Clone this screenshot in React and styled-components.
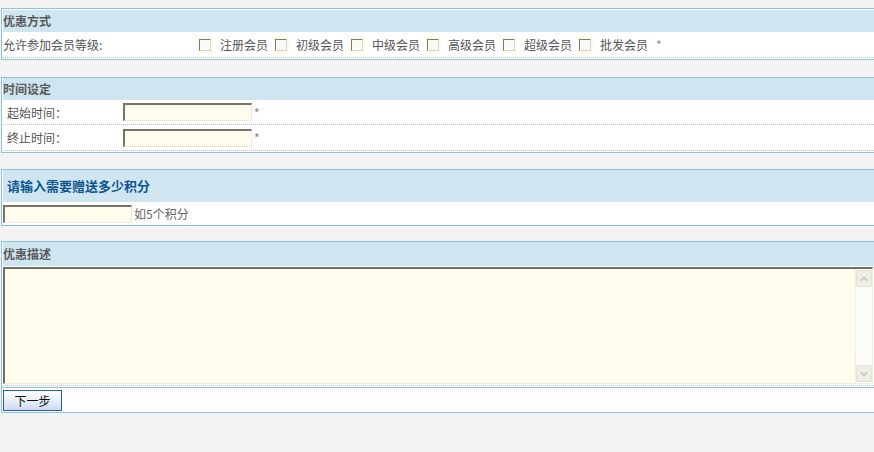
import styled, { createGlobalStyle } from "styled-components";
import { ChevronUp, ChevronDown } from "lucide-react";

const GlobalStyle = createGlobalStyle`
  html, body {
    margin: 0;
    padding: 0;
    background: #f3f3f3;
    overflow: hidden;
  }
  body {
    font-family: "Noto Sans CJK SC", "Liberation Sans", sans-serif;
    font-size: 12px;
    color: #555;
  }
`;

const Page = styled.div`
  padding: 8px 0 0 1px;
  height: 452px;
  box-sizing: border-box;
`;

// bordered block, open on the right like the old full-width tables
const Section = styled.div`
  border: 1px solid #8dc1dc;
  border-right: 0;
  background: #fff;
  padding: ${(p) => (p.$flush ? 0 : 1)}px 0 1px 1px;
  margin-bottom: ${(p) => p.$gap}px;
`;

const Title = styled.div`
  height: ${(p) => p.$h || 22}px;
  line-height: ${(p) => p.$h || 22}px;
  background: #cfe5f0;
  padding-left: ${(p) => p.$indent || 0}px;
  font-weight: bold;
  font-size: ${(p) => (p.$big ? 13 : 12)}px;
  color: ${(p) => (p.$big ? "#0d5590" : "#5a5a5a")};
  margin-bottom: ${(p) => p.$gapBelow || 0}px;
`;

const Row = styled.div`
  display: flex;
  align-items: center;
  height: ${(p) => p.$h || 25}px;
  border-bottom: ${(p) => (p.$plain ? "0" : "1px dotted #bdbdbd")};
`;

const Label = styled.div`
  width: ${(p) => p.$w}px;
  padding-left: ${(p) => p.$pad || 0}px;
  box-sizing: border-box;
  flex-shrink: 0;
  color: #555;
`;

const LevelList = styled.div`
  display: flex;
  align-items: center;
`;

const Level = styled.label`
  display: flex;
  align-items: center;
  margin-right: 5px;
`;

const CheckCell = styled.span`
  display: flex;
  align-items: center;
  justify-content: center;
  width: 16px;
  height: 18px;
  background: #fffbea;
  margin-right: 7px;
`;

const Check = styled.input.attrs({ type: "checkbox" })`
  appearance: none;
  margin: 0;
  width: 12px;
  height: 12px;
  box-sizing: border-box;
  border-top: 1px solid #7c7b70;
  border-left: 1px solid #7c7b70;
  border-right: 1px solid #d4d3c8;
  border-bottom: 1px solid #d4d3c8;
  background: #fbfbf6;
`;

const Star = styled.span`
  color: ${(p) => p.$c || "#8b91a8"};
  margin-left: ${(p) => p.$ml || 0}px;
`;

const Field = styled.input`
  width: 129px;
  height: 18px;
  box-sizing: border-box;
  margin: 0;
  padding: 0 2px;
  background: #fffcee;
  border-top: 2px solid #767467;
  border-left: 2px solid #767467;
  border-right: 1px solid #ece9dc;
  border-bottom: 1px solid #ece9dc;
  outline: none;
  font: inherit;
`;

const Hint = styled.span`
  color: #666;
  margin-left: 2px;
`;

const NoteBox = styled.div`
  display: flex;
  height: 117px;
  margin: 1px 1px 0 0;
  box-sizing: border-box;
  background: #fffcee;
  border-top: 2px solid #716f63;
  border-left: 2px solid #716f63;
  border-right: 1px solid #eeece0;
  border-bottom: 1px solid #eeece0;
`;

const Note = styled.textarea`
  flex: 1;
  border: 0;
  margin: 0;
  padding: 2px;
  background: transparent;
  resize: none;
  outline: none;
  font: inherit;
`;

const ScrollTrack = styled.div`
  width: 16px;
  display: flex;
  flex-direction: column;
  justify-content: space-between;
  align-items: flex-end;
  padding: 1px 0;
  background: #fbfbf9;
  border-left: 1px solid #f0efe6;
`;

const ScrollBtn = styled.div`
  width: 14px;
  height: 15px;
  display: flex;
  align-items: center;
  justify-content: center;
  background: #efeee6;
  border: 1px solid #e2e1d8;
  border-radius: 2px;
  color: #c2c2ba;
`;

const Dots = styled.div`
  margin-top: 1px;
  border-bottom: 1px dotted #bdbdbd;
`;

const ButtonBar = styled.div`
  border: 1px solid #8dc1dc;
  border-top: 0;
  border-right: 0;
  background: #fff;
  padding: 2px 0 1px 1px;
  height: 21px;
`;

const NextButton = styled.button`
  display: block;
  height: 21px;
  width: 59px;
  margin: 0;
  padding: 0;
  border: 1px solid #2458b4;
  background: linear-gradient(#ffffff, #dde8f7 70%, #c9daf2);
  font: inherit;
  color: #111;
`;

const levels = ["注册会员", "初级会员", "中级会员", "高级会员", "超级会员", "批发会员"];

export default function App() {
  return (
    <Page>
      <GlobalStyle />

      <Section $gap={17}>
        <Title>优惠方式</Title>
        <Row>
          <Label $w={194}>允许参加会员等级:</Label>
          <LevelList>
            {levels.map((name) => (
              <Level key={name}>
                <CheckCell>
                  <Check />
                </CheckCell>
                {name}
              </Level>
            ))}
            <Star $ml={3}>*</Star>
          </LevelList>
        </Row>
      </Section>

      <Section $gap={16} $flush>
        <Title>时间设定</Title>
        <Row $h={24}>
          <Label $w={120} $pad={4}>起始时间：</Label>
          <Field />
          <Star $c="#a0709a" $ml={2}>*</Star>
        </Row>
        <Row $h={25}>
          <Label $w={120} $pad={4}>终止时间：</Label>
          <Field />
          <Star $c="#a0709a" $ml={2}>*</Star>
        </Row>
      </Section>

      <Section $gap={15} $flush>
        <Title $h={32} $big $indent={4} $gapBelow={1}>请输入需要赠送多少积分</Title>
        <Row $h={21} $plain>
          <Field />
          <Hint>如5个积分</Hint>
        </Row>
      </Section>

      <Section $gap={0} $flush>
        <Title $h={24}>优惠描述</Title>
        <NoteBox>
          <Note />
          <ScrollTrack>
            <ScrollBtn>
              <ChevronUp size={12} strokeWidth={3} />
            </ScrollBtn>
            <ScrollBtn>
              <ChevronDown size={12} strokeWidth={3} />
            </ScrollBtn>
          </ScrollTrack>
        </NoteBox>
        <Dots />
      </Section>
      <ButtonBar>
        <NextButton>下一步</NextButton>
      </ButtonBar>
    </Page>
  );
}
